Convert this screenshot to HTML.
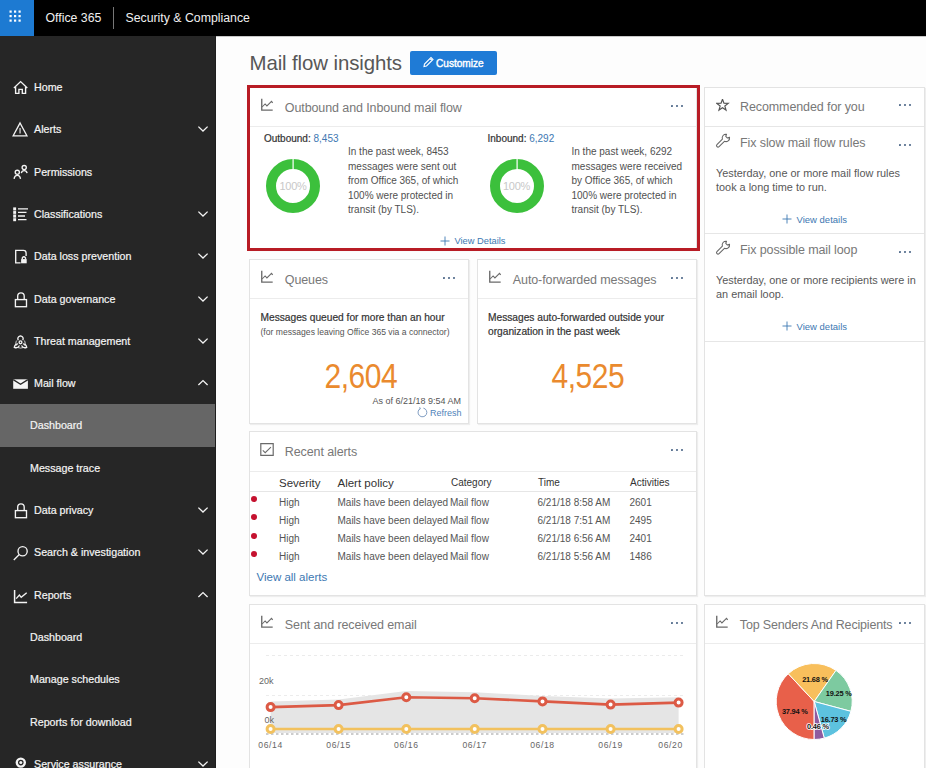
<!DOCTYPE html>
<html><head><meta charset="utf-8">
<style>
*{box-sizing:border-box;margin:0;padding:0}
html,body{width:926px;height:768px;overflow:hidden;background:#fdfdfd;font-family:"Liberation Sans",sans-serif}
.a{position:absolute;white-space:nowrap}
#top{position:absolute;left:0;top:0;width:926px;height:36px;background:#000}
#waffle{position:absolute;left:0;top:0;width:34px;height:36px;background:#1d7ad2}
#side{position:absolute;left:0;top:36px;width:216px;height:732px;background:#262626}
.si{position:absolute;left:0;width:215px;height:42.3px;line-height:42.3px;color:#f4f4f4;font-size:10.7px;-webkit-text-stroke:0.2px #f4f4f4}
.si .t{position:absolute;left:34px;top:0}
.si.sub .t{left:30px}
.si.sel{background:#666}
.si svg.ic{position:absolute;left:10px;top:11.15px}
.si svg.ch{position:absolute;left:197.2px;top:17px}
.card{position:absolute;background:#fff;border:1px solid #e3e3e3;box-shadow:1px 1px 1px rgba(0,0,0,0.06)}
.hd{position:absolute;left:0;top:0;right:0;border-bottom:1px solid #ececec}
.ttl{position:absolute;font-size:12.5px;color:#787878;white-space:nowrap;letter-spacing:-0.1px;line-height:16px}
.dots{position:absolute;width:13px;height:2px}
.dots i{position:absolute;top:0;width:1.9px;height:1.9px;background:#4a6586;border-radius:50%}
.dots i:nth-child(1){left:0}.dots i:nth-child(2){left:5px}.dots i:nth-child(3){left:10px}
</style></head><body>
<div id="top"><div id="waffle"><svg width="34" height="36" style="position:absolute;left:0;top:0"><g fill="#fff"><rect x="9.5" y="10.5" width="2.2" height="2.2"/><rect x="14" y="10.5" width="2.2" height="2.2"/><rect x="18.5" y="10.5" width="2.2" height="2.2"/><rect x="9.5" y="15" width="2.2" height="2.2"/><rect x="14" y="15" width="2.2" height="2.2"/><rect x="18.5" y="15" width="2.2" height="2.2"/><rect x="9.5" y="19.5" width="2.2" height="2.2"/><rect x="14" y="19.5" width="2.2" height="2.2"/><rect x="18.5" y="19.5" width="2.2" height="2.2"/></g></svg></div><div class="a" style="left:45.5px;top:9.5px;font-size:12.3px;color:#f0f0f0;line-height:17px">Office 365</div><div style="position:absolute;left:113px;top:7px;width:1px;height:22px;background:#777"></div><div class="a" style="left:125.5px;top:9.5px;font-size:12.3px;color:#f0f0f0;line-height:17px">Security &amp; Compliance</div></div>
<div id="side"></div><div style="position:absolute;left:214.5px;top:36px;width:1.5px;height:732px;background:#1e1e1e"></div><div class="si" style="top:66.00px"><svg class="ic" width="20" height="20"><path d="M3.9 10.9 L10.6 4.6 L17.3 10.9 M5.6 9.3 V16.3 H8.9 V12.4 H12.3 V16.3 H15.6 V9.3" stroke="#f4f4f4" stroke-width="1.35" fill="none" stroke-linejoin="miter"/></svg><span class="t">Home</span></div>
<div class="si" style="top:108.30px"><svg class="ic" width="20" height="20"><path d="M10.05 4 L16.9 16.8 H3.2 Z" stroke="#f4f4f4" stroke-width="1.35" fill="none"/><path d="M10.05 9 V14.5" stroke="#f4f4f4" stroke-width="1.1"/></svg><span class="t">Alerts</span><svg class="ch" width="12" height="8"><path d="M1.4 1.6 L6 6 L10.6 1.6" stroke="#f4f4f4" stroke-width="1.3" fill="none"/></svg></div>
<div class="si" style="top:150.60px"><svg class="ic" width="20" height="20"><circle cx="14.2" cy="5.6" r="2.1" stroke="#f4f4f4" stroke-width="1.35" fill="none"/><path d="M11.3 11.2 Q11.8 8.6 14.2 8.6 Q16.6 8.6 17.1 11.2" stroke="#f4f4f4" stroke-width="1.35" fill="none"/><circle cx="7.3" cy="10.3" r="2.1" stroke="#f4f4f4" stroke-width="1.35" fill="none"/><path d="M4.1 16.8 Q4.6 13.3 7.3 13.3 Q10 13.3 10.5 16.8" stroke="#f4f4f4" stroke-width="1.35" fill="none"/></svg><span class="t">Permissions</span></div>
<div class="si" style="top:192.90px"><svg class="ic" width="20" height="20"><rect x="3.2" y="3.4" width="2.9" height="13.8" fill="#f4f4f4"/><path d="M8 4.8 H18 M8 8.4 H16.5 M8 12 H15 M8 15.6 H16.5" stroke="#f4f4f4" stroke-width="1.3"/><path d="M3 6.6 H6.3 M3 10.3 H6.3 M3 13.9 H6.3" stroke="#262626" stroke-width="0.6"/></svg><span class="t">Classifications</span><svg class="ch" width="12" height="8"><path d="M1.4 1.6 L6 6 L10.6 1.6" stroke="#f4f4f4" stroke-width="1.3" fill="none"/></svg></div>
<div class="si" style="top:235.20px"><svg class="ic" width="20" height="20"><path d="M10.6 16.8 H5.7 V4.3 H13.4 Q16.1 4.3 16.1 7 V10" stroke="#f4f4f4" stroke-width="1.35" fill="none"/><rect x="11.1" y="13.1" width="5.6" height="4.2" fill="#f4f4f4"/><path d="M12.3 13.2 V11.9 Q13.9 9.6 15.5 11.9 V13.2" stroke="#f4f4f4" stroke-width="1.35" fill="none"/></svg><span class="t">Data loss prevention</span><svg class="ch" width="12" height="8"><path d="M1.4 1.6 L6 6 L10.6 1.6" stroke="#f4f4f4" stroke-width="1.3" fill="none"/></svg></div>
<div class="si" style="top:277.50px"><svg class="ic" width="20" height="20"><rect x="5.4" y="10.6" width="11.1" height="7.1" stroke="#f4f4f4" stroke-width="1.35" fill="none"/><path d="M7.7 10.6 V7.1 Q7.7 3.8 10.95 3.8 Q14.2 3.8 14.2 7.1 V10.6" stroke="#f4f4f4" stroke-width="1.35" fill="none"/></svg><span class="t">Data governance</span><svg class="ch" width="12" height="8"><path d="M1.4 1.6 L6 6 L10.6 1.6" stroke="#f4f4f4" stroke-width="1.3" fill="none"/></svg></div>
<div class="si" style="top:319.80px"><svg class="ic" width="20" height="20"><circle cx="10.5" cy="11.3" r="1.4" stroke="#f4f4f4" stroke-width="1.35" fill="none"/><path d="M8.2 9.2 Q6.8 6 10.5 4.9 Q14.2 6 12.8 9.2" stroke="#f4f4f4" stroke-width="1.35" fill="none"/><path d="M8.1 12.9 Q4.9 13 4.3 16.3 Q7.6 17.7 9.5 14.5" stroke="#f4f4f4" stroke-width="1.35" fill="none"/><path d="M12.9 12.9 Q16.1 13 16.7 16.3 Q13.4 17.7 11.5 14.5" stroke="#f4f4f4" stroke-width="1.35" fill="none"/><path d="M6.4 9.6 Q5 12.8 6.5 14.6 M14.6 9.6 Q16 12.8 14.5 14.6 M8 16.6 Q10.5 17.6 13 16.6" stroke="#f4f4f4" stroke-width="0.8" fill="none"/></svg><span class="t">Threat management</span><svg class="ch" width="12" height="8"><path d="M1.4 1.6 L6 6 L10.6 1.6" stroke="#f4f4f4" stroke-width="1.3" fill="none"/></svg></div>
<div class="si" style="top:362.10px"><svg class="ic" width="20" height="20"><path d="M3.2 6.3 H17.9 V15.8 H3.2 Z" fill="#f4f4f4"/><path d="M3.2 6.6 L10.55 11.3 L17.9 6.6" stroke="#262626" stroke-width="1.3" fill="none"/></svg><span class="t">Mail flow</span><svg class="ch" width="12" height="8"><path d="M1.4 6 L6 1.6 L10.6 6" stroke="#f4f4f4" stroke-width="1.3" fill="none"/></svg></div>
<div class="si sub sel" style="top:404.40px"><span class="t">Dashboard</span></div>
<div class="si sub" style="top:446.70px"><span class="t">Message trace</span></div>
<div class="si" style="top:489.00px"><svg class="ic" width="20" height="20"><rect x="5.4" y="10.6" width="11.1" height="7.1" stroke="#f4f4f4" stroke-width="1.35" fill="none"/><path d="M7.7 10.6 V7.1 Q7.7 3.8 10.95 3.8 Q14.2 3.8 14.2 7.1 V10.6" stroke="#f4f4f4" stroke-width="1.35" fill="none"/></svg><span class="t">Data privacy</span><svg class="ch" width="12" height="8"><path d="M1.4 1.6 L6 6 L10.6 1.6" stroke="#f4f4f4" stroke-width="1.3" fill="none"/></svg></div>
<div class="si" style="top:531.30px"><svg class="ic" width="20" height="20"><circle cx="12.6" cy="9.2" r="4.6" stroke="#f4f4f4" stroke-width="1.35" fill="none"/><path d="M9.3 12.5 L3.8 18" stroke="#f4f4f4" stroke-width="1.35" fill="none"/></svg><span class="t">Search &amp; investigation</span><svg class="ch" width="12" height="8"><path d="M1.4 1.6 L6 6 L10.6 1.6" stroke="#f4f4f4" stroke-width="1.3" fill="none"/></svg></div>
<div class="si" style="top:573.60px"><svg class="ic" width="20" height="20"><path d="M4.6 4.9 V17.5 H17.1" stroke="#f4f4f4" stroke-width="1.5" fill="none"/><path d="M6.2 13.6 L9.4 10 L11.2 12.3 L16.7 7.7" stroke="#f4f4f4" stroke-width="1.35" fill="none"/></svg><span class="t">Reports</span><svg class="ch" width="12" height="8"><path d="M1.4 6 L6 1.6 L10.6 6" stroke="#f4f4f4" stroke-width="1.3" fill="none"/></svg></div>
<div class="si sub" style="top:615.90px"><span class="t">Dashboard</span></div>
<div class="si sub" style="top:658.20px"><span class="t">Manage schedules</span></div>
<div class="si sub" style="top:700.50px"><span class="t">Reports for download</span></div>
<div class="si" style="top:742.80px"><svg class="ic" width="20" height="20"><circle cx="10.8" cy="8.6" r="4" stroke="#f4f4f4" stroke-width="2.4" fill="none"/><circle cx="10.8" cy="8.6" r="1.5" fill="#f4f4f4"/></svg><span class="t">Service assurance</span><svg class="ch" width="12" height="8"><path d="M1.4 1.6 L6 6 L10.6 1.6" stroke="#f4f4f4" stroke-width="1.3" fill="none"/></svg></div>
<div style="position:absolute;left:216px;top:36px;width:710px;height:1px;background:#c8c8c8"></div><div class="a" style="left:249.5px;top:50.8px;font-size:20.4px;color:#575757;line-height:24px;letter-spacing:-0.1px">Mail flow insights</div><div style="position:absolute;left:410px;top:51px;width:87px;height:24px;background:#1f7bd6;border-radius:2px"></div><svg width="12" height="12" style="position:absolute;left:422px;top:56px"><path d="M2 10.5 L2.5 8 L9 1.5 L11 3.5 L4.5 10 Z M8 2.5 L10 4.5" stroke="#fff" stroke-width="1.1" fill="none"/></svg><div class="a" style="left:436px;top:57.3px;font-size:10.1px;color:#fff;line-height:13px;-webkit-text-stroke:0.4px #fff;letter-spacing:0px">Customize</div><div class="card" style="left:249px;top:87px;width:448px;height:163px"><div class="hd" style="height:39px"></div></div><svg width="14" height="14" style="position:absolute;left:261px;top:98.8px;overflow:visible"><path d="M0.75 -0.2 V11.1 H11.7" stroke="#6a6a6a" stroke-width="1.35" fill="none"/><path d="M1.1 8 L4.1 5 L5.9 6.9 L10.5 2.3 L11.7 3.8" stroke="#6a6a6a" stroke-width="1.05" fill="none"/></svg><div class="ttl" style="left:284.8px;top:99.5px">Outbound and Inbound mail flow</div><svg width="14" height="4" style="position:absolute;left:671.2px;top:103.6px"><g fill="#4a6586"><circle cx="1" cy="2" r="1.05"/><circle cx="6" cy="2" r="1.05"/><circle cx="11" cy="2" r="1.05"/></g></svg><div style="position:absolute;left:247px;top:85px;width:453px;height:166px;border:3px solid #b81c25"></div><div class="a" style="left:264px;top:131.5px;font-size:10px;color:#333;line-height:13px"><span style="-webkit-text-stroke:0.2px #333">Outbound:</span> <span style="color:#3d78b2">8,453</span></div><svg width="60" height="60" style="position:absolute;left:263px;top:155.8px"><circle cx="30" cy="30" r="22" stroke="#3cc03c" stroke-width="10" fill="none"/><rect x="29.5" y="3" width="1.2" height="10" fill="#fff"/></svg><div class="a" style="left:263px;top:178.8px;width:60px;text-align:center;font-size:11px;color:#c8c8c8;line-height:14px;letter-spacing:-0.3px">100%</div><div class="a" style="left:348px;top:145px;font-size:10px;color:#505050;line-height:14.6px">In the past week, 8453<br>messages were sent out<br>from Office 365, of which<br>100% were protected in<br>transit (by TLS).</div><div class="a" style="left:487.5px;top:131.5px;font-size:10px;color:#333;line-height:13px"><span style="-webkit-text-stroke:0.2px #333">Inbound:</span> <span style="color:#3d78b2">6,292</span></div><svg width="60" height="60" style="position:absolute;left:486.5px;top:155.8px"><circle cx="30" cy="30" r="22" stroke="#3cc03c" stroke-width="10" fill="none"/><rect x="29.5" y="3" width="1.2" height="10" fill="#fff"/></svg><div class="a" style="left:486.5px;top:178.8px;width:60px;text-align:center;font-size:11px;color:#c8c8c8;line-height:14px;letter-spacing:-0.3px">100%</div><div class="a" style="left:571.5px;top:145px;font-size:10px;color:#505050;line-height:14.6px">In the past week, 6292<br>messages were received<br>by Office 365, of which<br>100% were protected in<br>transit (by TLS).</div><svg width="10" height="10" style="position:absolute;left:440px;top:236px"><path d="M5 0.5 V9.5 M0.5 5 H9.5" stroke="#3d78b2" stroke-width="0.9"/></svg><div class="a" style="left:454.5px;top:235px;font-size:9.3px;color:#3d78b2;line-height:13px">View Details</div><div class="card" style="left:249px;top:259px;width:220px;height:165px"><div class="hd" style="height:39px"></div></div><svg width="14" height="14" style="position:absolute;left:261px;top:270.8px;overflow:visible"><path d="M0.75 -0.2 V11.1 H11.7" stroke="#6a6a6a" stroke-width="1.35" fill="none"/><path d="M1.1 8 L4.1 5 L5.9 6.9 L10.5 2.3 L11.7 3.8" stroke="#6a6a6a" stroke-width="1.05" fill="none"/></svg><div class="ttl" style="left:284.8px;top:271.5px">Queues</div><svg width="14" height="4" style="position:absolute;left:443.2px;top:275.6px"><g fill="#4a6586"><circle cx="1" cy="2" r="1.05"/><circle cx="6" cy="2" r="1.05"/><circle cx="11" cy="2" r="1.05"/></g></svg><div class="a" style="left:260.5px;top:311px;font-size:10.2px;color:#333;-webkit-text-stroke:0.2px #333;line-height:13px">Messages queued for more than an hour</div><div class="a" style="left:260.5px;top:326px;font-size:8.6px;color:#555;line-height:12px">(for messages leaving Office 365 via a connector)</div><div class="a" style="left:324.5px;top:361px;font-size:30px;color:#ea8a2e;line-height:34px;letter-spacing:-0.5px;transform:scaleY(1.18);transform-origin:0 28.5px">2,604</div><div class="a" style="left:372.5px;top:395.3px;font-size:9px;color:#555;line-height:13px">As of 6/21/18 9:54 AM</div><svg width="12" height="12" style="position:absolute;left:417px;top:406.8px;overflow:visible"><path d="M3.2 1.6 A4.4 4.4 0 1 0 6.4 1.1" stroke="#7f9dc2" stroke-width="1" fill="none"/><path d="M2.6 0.2 L3.4 1.8 L1.8 2.6" stroke="#7f9dc2" stroke-width="0.9" fill="none"/></svg><div class="a" style="left:430px;top:407px;font-size:9px;color:#4f83ba;line-height:13px">Refresh</div><div class="card" style="left:477px;top:259px;width:220px;height:165px"><div class="hd" style="height:39px"></div></div><svg width="14" height="14" style="position:absolute;left:489px;top:270.8px;overflow:visible"><path d="M0.75 -0.2 V11.1 H11.7" stroke="#6a6a6a" stroke-width="1.35" fill="none"/><path d="M1.1 8 L4.1 5 L5.9 6.9 L10.5 2.3 L11.7 3.8" stroke="#6a6a6a" stroke-width="1.05" fill="none"/></svg><div class="ttl" style="left:512.8px;top:271.5px">Auto-forwarded messages</div><svg width="14" height="4" style="position:absolute;left:671.2px;top:275.6px"><g fill="#4a6586"><circle cx="1" cy="2" r="1.05"/><circle cx="6" cy="2" r="1.05"/><circle cx="11" cy="2" r="1.05"/></g></svg><div class="a" style="left:488px;top:311px;font-size:10.2px;color:#333;-webkit-text-stroke:0.2px #333;line-height:14.3px">Messages auto-forwarded outside your<br>organization in the past week</div><div class="a" style="left:551.5px;top:361px;font-size:30px;color:#ea8a2e;line-height:34px;letter-spacing:-0.5px;transform:scaleY(1.18);transform-origin:0 28.5px">4,525</div><div class="card" style="left:249px;top:431px;width:448px;height:165px"><div class="hd" style="height:39.5px"></div></div><svg width="14" height="14" style="position:absolute;left:261px;top:442.8px;overflow:visible"><path d="M-0.2 0.7 H12.2 V12.4 H-0.2 Z" stroke="#6a6a6a" stroke-width="1.2" fill="none"/><path d="M1.8 7.4 L4.2 9.7 L9.9 4.1" stroke="#6a6a6a" stroke-width="1.05" fill="none"/></svg><div class="ttl" style="left:284.8px;top:443.5px">Recent alerts</div><svg width="14" height="4" style="position:absolute;left:671.2px;top:447.6px"><g fill="#4a6586"><circle cx="1" cy="2" r="1.05"/><circle cx="6" cy="2" r="1.05"/><circle cx="11" cy="2" r="1.05"/></g></svg><div style="position:absolute;left:250px;top:491px;width:446px;height:1px;background:#e6e6e6"></div><div class="a" style="left:279px;top:476px;font-size:11.5px;color:#333;line-height:14px">Severity</div><div class="a" style="left:337.5px;top:476px;font-size:11.5px;color:#333;line-height:14px">Alert policy</div><div class="a" style="left:451px;top:476px;font-size:10px;color:#333;line-height:14px">Category</div><div class="a" style="left:538px;top:476px;font-size:10px;color:#333;line-height:14px">Time</div><div class="a" style="left:630px;top:476px;font-size:10px;color:#333;line-height:14px">Activities</div><div style="position:absolute;left:251px;top:496.1px;width:6px;height:6px;border-radius:50%;background:#c5112f"></div><div class="a" style="left:279px;top:495.6px;font-size:10px;color:#555;line-height:14px">High</div><div class="a" style="left:337.5px;top:495.6px;font-size:10px;color:#555;line-height:14px">Mails have been delayed</div><div class="a" style="left:450px;top:495.6px;font-size:10px;color:#555;line-height:14px">Mail flow</div><div class="a" style="left:537.5px;top:495.6px;font-size:10px;color:#555;line-height:14px">6/21/18 8:58 AM</div><div class="a" style="left:629.5px;top:495.6px;font-size:10px;color:#555;line-height:14px">2601</div><div style="position:absolute;left:251px;top:514.3px;width:6px;height:6px;border-radius:50%;background:#c5112f"></div><div class="a" style="left:279px;top:513.8px;font-size:10px;color:#555;line-height:14px">High</div><div class="a" style="left:337.5px;top:513.8px;font-size:10px;color:#555;line-height:14px">Mails have been delayed</div><div class="a" style="left:450px;top:513.8px;font-size:10px;color:#555;line-height:14px">Mail flow</div><div class="a" style="left:537.5px;top:513.8px;font-size:10px;color:#555;line-height:14px">6/21/18 7:51 AM</div><div class="a" style="left:629.5px;top:513.8px;font-size:10px;color:#555;line-height:14px">2495</div><div style="position:absolute;left:251px;top:532.5px;width:6px;height:6px;border-radius:50%;background:#c5112f"></div><div class="a" style="left:279px;top:532.0px;font-size:10px;color:#555;line-height:14px">High</div><div class="a" style="left:337.5px;top:532.0px;font-size:10px;color:#555;line-height:14px">Mails have been delayed</div><div class="a" style="left:450px;top:532.0px;font-size:10px;color:#555;line-height:14px">Mail flow</div><div class="a" style="left:537.5px;top:532.0px;font-size:10px;color:#555;line-height:14px">6/21/18 6:56 AM</div><div class="a" style="left:629.5px;top:532.0px;font-size:10px;color:#555;line-height:14px">2401</div><div style="position:absolute;left:251px;top:550.7px;width:6px;height:6px;border-radius:50%;background:#c5112f"></div><div class="a" style="left:279px;top:550.2px;font-size:10px;color:#555;line-height:14px">High</div><div class="a" style="left:337.5px;top:550.2px;font-size:10px;color:#555;line-height:14px">Mails have been delayed</div><div class="a" style="left:450px;top:550.2px;font-size:10px;color:#555;line-height:14px">Mail flow</div><div class="a" style="left:537.5px;top:550.2px;font-size:10px;color:#555;line-height:14px">6/21/18 5:56 AM</div><div class="a" style="left:629.5px;top:550.2px;font-size:10px;color:#555;line-height:14px">1486</div><div class="a" style="left:256.5px;top:570px;font-size:11.5px;color:#3d78b2;line-height:15px">View all alerts</div><div class="card" style="left:249px;top:604px;width:448px;height:170px"><div class="hd" style="height:39px"></div></div><svg width="14" height="14" style="position:absolute;left:261px;top:615.8px;overflow:visible"><path d="M0.75 -0.2 V11.1 H11.7" stroke="#6a6a6a" stroke-width="1.35" fill="none"/><path d="M1.1 8 L4.1 5 L5.9 6.9 L10.5 2.3 L11.7 3.8" stroke="#6a6a6a" stroke-width="1.05" fill="none"/></svg><div class="ttl" style="left:284.8px;top:616.5px">Sent and received email</div><svg width="14" height="4" style="position:absolute;left:671.2px;top:620.6px"><g fill="#4a6586"><circle cx="1" cy="2" r="1.05"/><circle cx="6" cy="2" r="1.05"/><circle cx="11" cy="2" r="1.05"/></g></svg><div class="card" style="left:704px;top:87px;width:221px;height:509px"></div><div style="position:absolute;left:705px;top:125.5px;width:219px;height:1px;background:#e6e6e6"></div><div style="position:absolute;left:705px;top:232.5px;width:219px;height:1px;background:#e6e6e6"></div><div style="position:absolute;left:705px;top:340.5px;width:219px;height:1px;background:#e6e6e6"></div><svg width="14" height="13" style="position:absolute;left:716px;top:99px"><path d="M6.50 0.20 L7.94 4.22 L12.21 4.35 L8.83 6.96 L10.03 11.05 L6.50 8.65 L2.97 11.05 L4.17 6.96 L0.79 4.35 L5.06 4.22 Z" stroke="#555" stroke-width="1.15" fill="none" stroke-linejoin="miter"/></svg><div class="ttl" style="left:740px;top:99px">Recommended for you</div><svg width="14" height="4" style="position:absolute;left:899px;top:103px"><g fill="#4a6586"><circle cx="1" cy="2" r="1.05"/><circle cx="6" cy="2" r="1.05"/><circle cx="11" cy="2" r="1.05"/></g></svg><svg width="14" height="14" style="position:absolute;left:715.5px;top:134.2px;overflow:visible"><path d="M0.94 10.54 L6.39 5.08 A3.7 3.7 0 0 1 10.54 0.26 L9.76 2.31 L11.49 4.04 L13.54 3.26 A3.7 3.7 0 0 1 8.43 7.29 L3.06 12.66 A1.5 1.5 0 0 1 0.94 10.54 Z" stroke="#666" stroke-width="1.05" fill="none" stroke-linejoin="round"/></svg><div class="ttl" style="left:740px;top:134.5px">Fix slow mail flow rules</div><svg width="14" height="4" style="position:absolute;left:899px;top:142.8px"><g fill="#4a6586"><circle cx="1" cy="2" r="1.05"/><circle cx="6" cy="2" r="1.05"/><circle cx="11" cy="2" r="1.05"/></g></svg><div class="a" style="left:716px;top:166px;font-size:10.9px;color:#585858;line-height:14.3px">Yesterday, one or more mail flow rules<br>took a long time to run.</div><svg width="10" height="10" style="position:absolute;left:781.5px;top:213.5px"><path d="M5 0.5 V9.5 M0.5 5 H9.5" stroke="#3d78b2" stroke-width="0.9"/></svg><div class="a" style="left:796.5px;top:212.5px;font-size:9.5px;color:#3d78b2;line-height:13px">View details</div><svg width="14" height="14" style="position:absolute;left:715.5px;top:241.2px;overflow:visible"><path d="M0.94 10.54 L6.39 5.08 A3.7 3.7 0 0 1 10.54 0.26 L9.76 2.31 L11.49 4.04 L13.54 3.26 A3.7 3.7 0 0 1 8.43 7.29 L3.06 12.66 A1.5 1.5 0 0 1 0.94 10.54 Z" stroke="#666" stroke-width="1.05" fill="none" stroke-linejoin="round"/></svg><div class="ttl" style="left:740px;top:241.5px">Fix possible mail loop</div><svg width="14" height="4" style="position:absolute;left:899px;top:249.8px"><g fill="#4a6586"><circle cx="1" cy="2" r="1.05"/><circle cx="6" cy="2" r="1.05"/><circle cx="11" cy="2" r="1.05"/></g></svg><div class="a" style="left:716px;top:273px;font-size:10.9px;color:#585858;line-height:14.3px">Yesterday, one or more recipients were in<br>an email loop.</div><svg width="10" height="10" style="position:absolute;left:781.5px;top:320.5px"><path d="M5 0.5 V9.5 M0.5 5 H9.5" stroke="#3d78b2" stroke-width="0.9"/></svg><div class="a" style="left:796.5px;top:319.5px;font-size:9.5px;color:#3d78b2;line-height:13px">View details</div><div class="card" style="left:704px;top:604px;width:221px;height:170px"><div class="hd" style="height:39px"></div></div><svg width="14" height="14" style="position:absolute;left:716px;top:615.8px;overflow:visible"><path d="M0.75 -0.2 V11.1 H11.7" stroke="#6a6a6a" stroke-width="1.35" fill="none"/><path d="M1.1 8 L4.1 5 L5.9 6.9 L10.5 2.3 L11.7 3.8" stroke="#6a6a6a" stroke-width="1.05" fill="none"/></svg><div class="ttl" style="left:739.8px;top:616.5px"><span style="letter-spacing:-0.17px">Top Senders And Recipients</span></div><svg width="14" height="4" style="position:absolute;left:899.2px;top:620.6px"><g fill="#4a6586"><circle cx="1" cy="2" r="1.05"/><circle cx="6" cy="2" r="1.05"/><circle cx="11" cy="2" r="1.05"/></g></svg><svg width="926" height="768" style="position:absolute;left:0;top:0"><line x1="266" y1="655.5" x2="685" y2="655.5" stroke="#ebebeb" stroke-width="1" stroke-dasharray="3,3"/><line x1="266" y1="695.5" x2="685" y2="695.5" stroke="#ececec" stroke-width="1" stroke-dasharray="3,3"/><polygon points="270.6,733 270.6,701.6 338.6,699.6 406.3,691.0 474.7,692.2 542.5,696.0 610.6,698.4 678.6,697.2 678.6,733" fill="#e5e5e5"/><line x1="266" y1="734" x2="685" y2="734" stroke="#9a9a9a" stroke-width="1" stroke-dasharray="2.5,2.5"/><polyline points="270.6,707.1 338.6,705.1 406.3,697.2 474.7,698.2 542.5,701.4 610.6,704.6 678.6,702.6" fill="none" stroke="#dc5a45" stroke-width="2.6"/><polyline points="270.6,729 338.6,729 406.3,729 474.7,729 542.5,729 610.6,729 678.6,729" fill="none" stroke="#f2c15e" stroke-width="2.6"/><circle cx="270.6" cy="707.1" r="3.5" fill="#fff" stroke="#dc5a45" stroke-width="3"/><circle cx="338.6" cy="705.1" r="3.5" fill="#fff" stroke="#dc5a45" stroke-width="3"/><circle cx="406.3" cy="697.2" r="3.5" fill="#fff" stroke="#dc5a45" stroke-width="3"/><circle cx="474.7" cy="698.2" r="3.5" fill="#fff" stroke="#dc5a45" stroke-width="3"/><circle cx="542.5" cy="701.4" r="3.5" fill="#fff" stroke="#dc5a45" stroke-width="3"/><circle cx="610.6" cy="704.6" r="3.5" fill="#fff" stroke="#dc5a45" stroke-width="3"/><circle cx="678.6" cy="702.6" r="3.5" fill="#fff" stroke="#dc5a45" stroke-width="3"/><circle cx="270.6" cy="729" r="3.5" fill="#fff" stroke="#f2c15e" stroke-width="3"/><circle cx="338.6" cy="729" r="3.5" fill="#fff" stroke="#f2c15e" stroke-width="3"/><circle cx="406.3" cy="729" r="3.5" fill="#fff" stroke="#f2c15e" stroke-width="3"/><circle cx="474.7" cy="729" r="3.5" fill="#fff" stroke="#f2c15e" stroke-width="3"/><circle cx="542.5" cy="729" r="3.5" fill="#fff" stroke="#f2c15e" stroke-width="3"/><circle cx="610.6" cy="729" r="3.5" fill="#fff" stroke="#f2c15e" stroke-width="3"/><circle cx="678.6" cy="729" r="3.5" fill="#fff" stroke="#f2c15e" stroke-width="3"/></svg><div class="a" style="left:259px;top:676px;font-size:9px;color:#666;line-height:11px">20k</div><div class="a" style="left:264.5px;top:715px;font-size:9px;color:#666;line-height:11px">0k</div><div class="a" style="left:250.60000000000002px;top:739.5px;width:40px;text-align:center;font-size:8.6px;color:#666;line-height:11px;letter-spacing:0.6px">06/14</div><div class="a" style="left:318.6px;top:739.5px;width:40px;text-align:center;font-size:8.6px;color:#666;line-height:11px;letter-spacing:0.6px">06/15</div><div class="a" style="left:386.3px;top:739.5px;width:40px;text-align:center;font-size:8.6px;color:#666;line-height:11px;letter-spacing:0.6px">06/16</div><div class="a" style="left:454.7px;top:739.5px;width:40px;text-align:center;font-size:8.6px;color:#666;line-height:11px;letter-spacing:0.6px">06/17</div><div class="a" style="left:522.5px;top:739.5px;width:40px;text-align:center;font-size:8.6px;color:#666;line-height:11px;letter-spacing:0.6px">06/18</div><div class="a" style="left:590.6px;top:739.5px;width:40px;text-align:center;font-size:8.6px;color:#666;line-height:11px;letter-spacing:0.6px">06/19</div><div class="a" style="left:650.6px;top:739.5px;width:40px;text-align:center;font-size:8.6px;color:#666;line-height:11px;letter-spacing:0.6px">06/20</div><svg width="926" height="768" style="position:absolute;left:0;top:0"><path d="M814.2,701.5 L814.20,739.50 A38,38 0 0 1 788.28,673.71 Z" fill="#e8604a" stroke="#fff" stroke-width="1"/><path d="M814.2,701.5 L788.28,673.71 A38,38 0 0 1 836.00,670.37 Z" fill="#f8bf5c" stroke="#fff" stroke-width="1"/><path d="M814.2,701.5 L836.00,670.37 A38,38 0 0 1 850.91,711.34 Z" fill="#7dcaa0" stroke="#fff" stroke-width="1"/><path d="M814.2,701.5 L850.91,711.34 A38,38 0 0 1 824.29,738.14 Z" fill="#5dc2df" stroke="#fff" stroke-width="1"/><path d="M814.2,701.5 L824.29,738.14 A38,38 0 0 1 814.20,739.50 Z" fill="#8f5b9f" stroke="#fff" stroke-width="1"/><text x="815" y="682.0" text-anchor="middle" font-family="Liberation Sans" font-size="7.4px" font-weight="bold" fill="#111" letter-spacing="-0.2">21.68 %</text><text x="838.7" y="696.4" text-anchor="middle" font-family="Liberation Sans" font-size="7.4px" font-weight="bold" fill="#111" letter-spacing="-0.2">19.25 %</text><text x="833.6" y="721.9" text-anchor="middle" font-family="Liberation Sans" font-size="7.4px" font-weight="bold" fill="#111" letter-spacing="-0.2">16.73 %</text><text x="794.8" y="714.1" text-anchor="middle" font-family="Liberation Sans" font-size="7.4px" font-weight="bold" fill="#111" letter-spacing="-0.2">37.94 %</text><text x="817.9" y="729.1" text-anchor="middle" font-family="Liberation Sans" font-size="7.4px" font-weight="bold" fill="#111" stroke="#fff" stroke-width="1.6" paint-order="stroke" letter-spacing="-0.2">0.46 %</text></svg></body></html>
